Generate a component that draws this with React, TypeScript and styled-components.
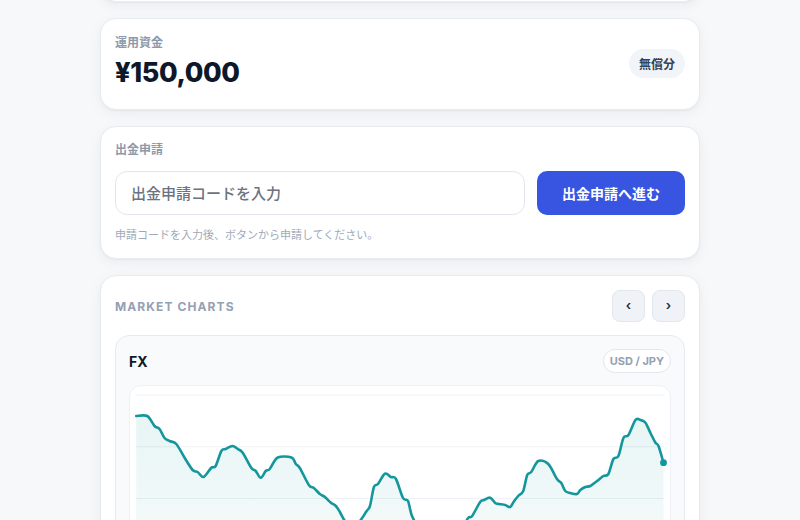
import React from "react";
import styled, { createGlobalStyle } from "styled-components";

const GlobalStyle = createGlobalStyle`
  * { box-sizing: border-box; }
  html, body { margin: 0; padding: 0; background: #f7f8fa; }
  body {
    font-family: "Inter", "Noto Sans CJK JP", "Noto Sans", sans-serif;
    color: #0f172a;
    -webkit-font-smoothing: antialiased;
  }
`;

const Page = styled.div`
  width: 600px;
  margin: 0 auto;
  display: flex;
  flex-direction: column;
  gap: 16px;
  margin-top: -94px;
  padding-bottom: 40px;
`;

const Card = styled.section<{ $pad?: string }>`
  background: #ffffff;
  border: 1px solid #e8ebf0;
  border-radius: 16px;
  box-shadow: 0 4px 14px rgba(15, 23, 42, 0.05), 0 1px 2px rgba(15, 23, 42, 0.04);
  padding: ${(p) => p.$pad ?? "16px 14px"};
`;

const Spacer = styled.div`
  height: 62px;
`;

const Label = styled.div`
  font-size: 12px;
  line-height: 16px;
  font-weight: 700;
  color: #8e99ab;
`;

const BalanceRow = styled.div`
  display: flex;
  align-items: center;
  justify-content: space-between;
`;

const BalanceInfo = styled.div`
  display: flex;
  flex-direction: column;
  gap: 3px;
`;

const Amount = styled.div`
  font-size: 27px;
  line-height: 38px;
  font-weight: 800;
  color: #0f172a;
  letter-spacing: -0.4px;
`;

const Badge = styled.span`
  display: inline-flex;
  align-items: center;
  height: 29px;
  padding: 0 10px;
  border-radius: 999px;
  background: #f1f4f8;
  color: #334155;
  font-size: 12px;
  font-weight: 700;
`;

const FormRow = styled.div`
  display: flex;
  gap: 12px;
  margin-top: 13px;
`;

const CodeInput = styled.input`
  flex: 1;
  height: 44px;
  border: 1px solid #e3e7ed;
  border-radius: 12px;
  background: #fff;
  padding: 0 15px;
  font-family: inherit;
  font-size: 15px;
  font-weight: 500;
  color: #0f172a;
  outline: none;
  &::placeholder {
    color: #6b7280;
  }
`;

const PrimaryButton = styled.button`
  width: 148px;
  height: 44px;
  border: none;
  border-radius: 10px;
  background: #3755e0;
  color: #ffffff;
  font-family: inherit;
  font-size: 14px;
  font-weight: 700;
  cursor: pointer;
`;

const Help = styled.p`
  margin: 12px 0 0;
  font-size: 11px;
  line-height: 16px;
  color: #a0a9b8;
`;

const SectionHeader = styled.div`
  display: flex;
  align-items: center;
  justify-content: space-between;
`;

const SectionTitle = styled.h2`
  margin: 0;
  font-size: 12px;
  font-weight: 700;
  letter-spacing: 1.1px;
  color: #94a0b4;
`;

const NavGroup = styled.div`
  display: flex;
  gap: 7px;
`;

const NavButton = styled.button`
  width: 33px;
  height: 32px;
  border-radius: 8px;
  border: 1px solid #e2e7ee;
  background: #eff3f8;
  color: #1e293b;
  font-family: inherit;
  font-size: 13px;
  font-weight: 600;
  line-height: 1;
  display: flex;
  align-items: center;
  justify-content: center;
  padding: 0 0 2px;
`;

const Panel = styled.div`
  margin-top: 13px;
  background: #f8fafc;
  border: 1px solid #e6eaf0;
  border-radius: 14px;
  padding: 13px 13px 14px;
`;

const PanelHeader = styled.div`
  display: flex;
  align-items: center;
  justify-content: space-between;
  height: 24px;
`;

const PanelTitle = styled.h3`
  margin: 0;
  font-size: 14px;
  font-weight: 700;
  color: #0f172a;
`;

const Pill = styled.span`
  display: inline-flex;
  align-items: center;
  height: 24px;
  padding: 0 6px;
  border-radius: 999px;
  border: 1px solid #e2e7ee;
  background: #ffffff;
  color: #94a0b4;
  font-size: 11px;
  font-weight: 700;
`;

const ChartBox = styled.div`
  margin-top: 12px;
  background: #ffffff;
  border: 1px solid #edf0f4;
  border-radius: 12px;
  padding: 9px 6px 8px;
`;

const ChartSvg = styled.svg`
  display: block;
  width: 100%;
  height: 207px;
  overflow: visible;
`;

const W = 527;
const H = 207;
const OX = 136.5;
const OY = 394;

const RAW: [number, number][] = [
  [136.7, 415], [147.7, 415], [155, 425], [160, 428], [165, 437], [170, 440], [176.7, 443], [185, 456.7],
  [193, 469], [198, 471], [204, 476], [211.7, 466.7], [216, 465], [221.7, 450], [226, 448], [232.7, 445], [238, 448], [243, 451.7],
  [251.7, 467], [256, 470], [261, 476.7], [266, 470], [270, 468], [278, 456.5], [291.7, 456.5], [296, 463], [300, 467],
  [309, 484], [314, 487], [320, 493], [325, 496], [331, 501.7], [336, 505], [340, 511], [345, 520], [352, 527],
  [360, 520], [366.7, 510], [370, 505], [374, 486], [378, 483], [385, 472.7], [391, 476], [396, 478], [403, 497],
  [408, 500], [412, 515], [420, 527], [440, 533], [460, 528], [468, 517], [472, 515], [480, 501], [484, 499],
  [490, 496.7], [495, 502], [499, 503], [505, 504], [510, 506], [514, 500], [518, 495], [523, 490], [527, 474], [531, 471], [538, 460],
  [548, 463], [556.7, 478], [561, 482], [565, 490], [570, 492], [576.7, 493], [580, 489], [585, 486], [590, 485], [596.7, 480],
  [603, 475], [608, 473], [613, 458], [618, 455], [623, 437], [628, 434], [635, 419], [640, 419], [645, 421.7], [650, 432], [655, 441.7], [658, 445],
  [663, 461.7],
];

const PTS = RAW.map(([x, y]) => [x - OX, y - OY] as [number, number]);

function smoothPath(p: [number, number][]): string {
  let d = `M${p[0][0].toFixed(1)},${p[0][1].toFixed(1)}`;
  for (let i = 0; i < p.length - 1; i++) {
    const p0 = p[i - 1] || p[i];
    const p1 = p[i];
    const p2 = p[i + 1];
    const p3 = p[i + 2] || p2;
    const t = 0.16;
    const c1x = p1[0] + (p2[0] - p0[0]) * t;
    const c1y = p1[1] + (p2[1] - p0[1]) * t;
    const c2x = p2[0] - (p3[0] - p1[0]) * t;
    const c2y = p2[1] - (p3[1] - p1[1]) * t;
    d += ` C${c1x.toFixed(1)},${c1y.toFixed(1)} ${c2x.toFixed(1)},${c2y.toFixed(1)} ${p2[0].toFixed(1)},${p2[1].toFixed(1)}`;
  }
  return d;
}

const FxChart: React.FC = () => {
  const line = smoothPath(PTS);
  const first = PTS[0];
  const last = PTS[PTS.length - 1];
  const area = `${line} L${last[0]},${H} L${first[0]},${H} Z`;
  const grid = [0, 1, 2, 3, 4].map((i) => (H / 4) * i);
  return (
    <ChartSvg viewBox={`0 0 ${W} ${H}`} preserveAspectRatio="none">
      <defs>
        <linearGradient id="fxFill" x1="0" y1="0" x2="0" y2="1">
          <stop offset="0%" stopColor="#14979c" stopOpacity="0.1" />
          <stop offset="100%" stopColor="#14979c" stopOpacity="0.02" />
        </linearGradient>
      </defs>
      {grid.map((y) => (
        <line key={y} x1={0} x2={W} y1={y} y2={y} stroke="#eef1f5" strokeWidth={1} />
      ))}
      <path d={area} fill="url(#fxFill)" />
      <path d={line} fill="none" stroke="#14979c" strokeWidth={2.6} strokeLinejoin="round" strokeLinecap="round" />
      <circle cx={last[0]} cy={last[1]} r={3.4} fill="#14979c" />
    </ChartSvg>
  );
};

export default function App() {
  return (
    <>
      <GlobalStyle />
      <Page>
        <Card>
          <Spacer />
        </Card>

        <Card $pad="16px 14px 17px">
          <BalanceRow>
            <BalanceInfo>
              <Label>運用資金</Label>
              <Amount>¥150,000</Amount>
            </BalanceInfo>
            <Badge>無償分</Badge>
          </BalanceRow>
        </Card>

        <Card $pad="15px 14px 15px">
          <Label>出金申請</Label>
          <FormRow>
            <CodeInput placeholder="出金申請コードを入力" />
            <PrimaryButton>出金申請へ進む</PrimaryButton>
          </FormRow>
          <Help>申請コードを入力後、ボタンから申請してください。</Help>
        </Card>

        <Card $pad="14px 14px 16px">
          <SectionHeader>
            <SectionTitle>MARKET CHARTS</SectionTitle>
            <NavGroup>
              <NavButton aria-label="前へ">‹</NavButton>
              <NavButton aria-label="次へ">›</NavButton>
            </NavGroup>
          </SectionHeader>
          <Panel>
            <PanelHeader>
              <PanelTitle>FX</PanelTitle>
              <Pill>USD / JPY</Pill>
            </PanelHeader>
            <ChartBox>
              <FxChart />
            </ChartBox>
          </Panel>
        </Card>
      </Page>
    </>
  );
}
